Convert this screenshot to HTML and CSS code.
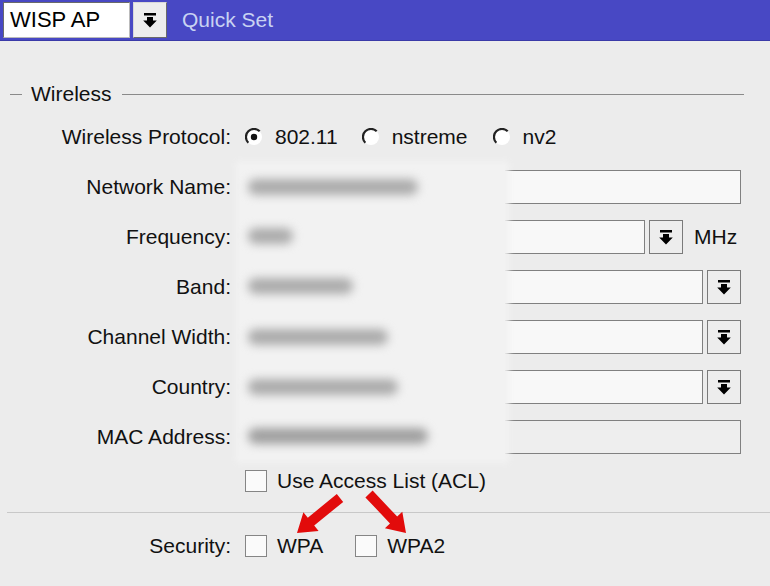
FILE: index.html
```html
<!DOCTYPE html>
<html>
<head>
<meta charset="utf-8">
<link rel="stylesheet" href="styles.css">
</head>
<body>
<div class="header">
  <div class="select">WISP AP</div>
  <div class="dd-btn hdr-btn"><svg class="ddi" viewBox="0 0 16 16"><path d="M2 0.5h12v2.4H2z M5 4.5h6v3.5h3.8L8 15 1.2 8H5z" fill="#000"/></svg></div>
  <div class="title">Quick Set</div>
</div>
<div class="main">
  <div class="legend"><span class="dash"></span><span class="legend-text">Wireless</span><span class="rule"></span></div>

  <div class="row">
    <div class="label">Wireless Protocol:</div>
    <div class="field radios">
      <span class="radio"><svg viewBox="0 0 18 18" width="18" height="18"><circle cx="9" cy="9" r="8" fill="#fff"/><path d="M3.3 14.7A8 8 0 0 1 14.7 3.3" fill="none" stroke="#222" stroke-width="2.2"/><circle cx="9" cy="9" r="3.2" fill="#111"/></svg></span><span class="rlabel r1">802.11</span>
      <span class="radio"><svg viewBox="0 0 18 18" width="18" height="18"><circle cx="9" cy="9" r="8" fill="#fff"/><path d="M3.3 14.7A8 8 0 0 1 14.7 3.3" fill="none" stroke="#222" stroke-width="2.2"/></svg></span><span class="rlabel r2">nstreme</span>
      <span class="radio"><svg viewBox="0 0 18 18" width="18" height="18"><circle cx="9" cy="9" r="8" fill="#fff"/><path d="M3.3 14.7A8 8 0 0 1 14.7 3.3" fill="none" stroke="#222" stroke-width="2.2"/></svg></span><span class="rlabel">nv2</span>
    </div>
  </div>

  <div class="row">
    <div class="label">Network Name:</div>
    <div class="field"><div class="input full"></div></div>
  </div>

  <div class="row">
    <div class="label">Frequency:</div>
    <div class="field"><div class="input freq"></div><div class="dd-btn"><svg class="ddi" viewBox="0 0 16 16"><path d="M2 0.5h12v2.4H2z M5 4.5h6v3.5h3.8L8 15 1.2 8H5z" fill="#000"/></svg></div><span class="unit">MHz</span></div>
  </div>

  <div class="row">
    <div class="label">Band:</div>
    <div class="field"><div class="input drop"></div><div class="dd-btn"><svg class="ddi" viewBox="0 0 16 16"><path d="M2 0.5h12v2.4H2z M5 4.5h6v3.5h3.8L8 15 1.2 8H5z" fill="#000"/></svg></div></div>
  </div>

  <div class="row">
    <div class="label">Channel Width:</div>
    <div class="field"><div class="input drop"></div><div class="dd-btn"><svg class="ddi" viewBox="0 0 16 16"><path d="M2 0.5h12v2.4H2z M5 4.5h6v3.5h3.8L8 15 1.2 8H5z" fill="#000"/></svg></div></div>
  </div>

  <div class="row">
    <div class="label">Country:</div>
    <div class="field"><div class="input drop"></div><div class="dd-btn"><svg class="ddi" viewBox="0 0 16 16"><path d="M2 0.5h12v2.4H2z M5 4.5h6v3.5h3.8L8 15 1.2 8H5z" fill="#000"/></svg></div></div>
  </div>

  <div class="row">
    <div class="label">MAC Address:</div>
    <div class="field"><div class="input full disabled"></div></div>
  </div>

  <div class="row acl">
    <div class="label"></div>
    <div class="field"><span class="check"></span><span class="clabel">Use Access List (ACL)</span></div>
  </div>

  <div class="sep"></div>

  <div class="row sec">
    <div class="label">Security:</div>
    <div class="field"><span class="check"></span><span class="clabel c1">WPA</span><span class="check"></span><span class="clabel">WPA2</span></div>
  </div>

  <div class="blur-cover">
    <span class="bb b1"></span>
    <span class="bb b2"></span>
    <span class="bb b3"></span>
    <span class="bb b4"></span>
    <span class="bb b5"></span>
    <span class="bb b6"></span>
  </div>

  <svg class="arrows" width="770" height="586" viewBox="0 0 770 586">
    <g fill="#e20b0b">
      <path d="M336.8 494.1 L343.2 501.9 L314.2 525.5 L318.6 530.9 L297 533 L303.4 512.3 L307.8 517.7 Z"/>
      <path d="M372.6 490.6 L365.4 497.4 L390 523.4 L384.9 528.3 L406 533 L402.3 511.7 L397.2 516.6 Z"/>
    </g>
  </svg>
</div>
</body>
</html>
```

FILE: styles.css
```css
html, body {
  margin: 0;
  padding: 0;
}
body {
  width: 770px;
  height: 586px;
  overflow: hidden;
  background: #ececec;
  font-family: "Liberation Sans", Arial, sans-serif;
  font-size: 21px;
  color: #111;
}
.header {
  height: 41px;
  background: #4848c4;
  display: flex;
  align-items: center;
  padding: 0 0 0 3px;
  box-sizing: border-box;
  border-bottom: 1px solid #3a3aa8;
}
.select {
  width: 127px;
  height: 36px;
  box-sizing: border-box;
  background: #fff;
  border: 1px solid #6a6a6a;
  border-right-color: #bbb;
  border-bottom-color: #bbb;
  padding-left: 6px;
  line-height: 34px;
  font-size: 22px;
  color: #000;
}
.dd-btn {
  width: 34px;
  height: 34px;
  box-sizing: border-box;
  background: #ededed;
  border: 1px solid #7a7a7a;
  display: flex;
  align-items: center;
  justify-content: center;
  margin-left: 4px;
}
.ddi {
  width: 16px;
  height: 17px;
  display: block;
}
.hdr-btn {
  margin-left: 3px;
  height: 36px;
  border-color: #d8d8d8 #6a6a6a #6a6a6a #d8d8d8;
}
.title {
  margin-left: 15px;
  color: #c9d3f2;
  font-size: 21px;
}
.main {
  position: relative;
  height: 545px;
  padding-top: 41px;
  box-sizing: border-box;
}
.legend {
  display: flex;
  align-items: center;
  height: 24px;
  padding-left: 10px;
  width: 734px;
}
.dash {
  width: 12px;
  height: 1px;
  background: #8a8a8a;
}
.legend-text {
  margin: 0 10px 0 9px;
}
.rule {
  flex: 1;
  height: 1px;
  background: #8a8a8a;
}
.row {
  display: flex;
  align-items: center;
  height: 50px;
}
.legend + .row {
  margin-top: 6px;
}
.label {
  width: 231px;
  text-align: right;
  padding-right: 2px;
  flex: none;
}
.field {
  margin-left: 7px;
  display: flex;
  align-items: center;
}
.radios {
  margin-left: 12px;
}
.radio {
  display: flex;
  width: 18px;
  height: 18px;
}
.rlabel {
  margin-left: 12px;
}
.r1 {
  margin-right: 24px;
}
.r2 {
  margin-right: 25px;
}
.input {
  height: 34px;
  box-sizing: border-box;
  background: #f8f8f8;
  border: 1px solid #808080;
}
.full {
  width: 501px;
}
.freq {
  width: 405px;
}
.drop {
  width: 463px;
}
.disabled {
  background: #eeeeee;
}
.unit {
  margin-left: 11px;
}
.acl {
  height: 38px;
}
.check {
  display: inline-block;
  width: 22px;
  height: 22px;
  box-sizing: border-box;
  background: #fafafa;
  border: 1px solid #858585;
  margin-left: 5px;
}
.clabel {
  margin-left: 10px;
}
.c1 {
  margin-right: 27px;
}
.sep {
  height: 1px;
  background: #c8c8c8;
  margin: 12px 0 16px 7px;
  width: 763px;
}
.sec {
  height: 34px;
}
.blur-cover {
  position: absolute;
  left: 240px;
  top: 124px;
  width: 265px;
  height: 294px;
  background: #f2f2f2;
  box-shadow: 0 0 6px 4px #f2f2f2;
}
.bb {
  position: absolute;
  left: 8px;
  height: 16px;
  background: #acacac;
  filter: blur(5px);
  border-radius: 8px;
}
.b1 { top: 14px; width: 170px; }
.b2 { top: 63px; width: 45px; }
.b3 { top: 113px; width: 105px; }
.b4 { top: 164px; width: 140px; }
.b5 { top: 214px; width: 150px; }
.b6 { top: 263px; width: 180px; background: #a0a0a0; }
.arrows {
  position: absolute;
  left: 0;
  top: -41px;
  pointer-events: none;
}
```
